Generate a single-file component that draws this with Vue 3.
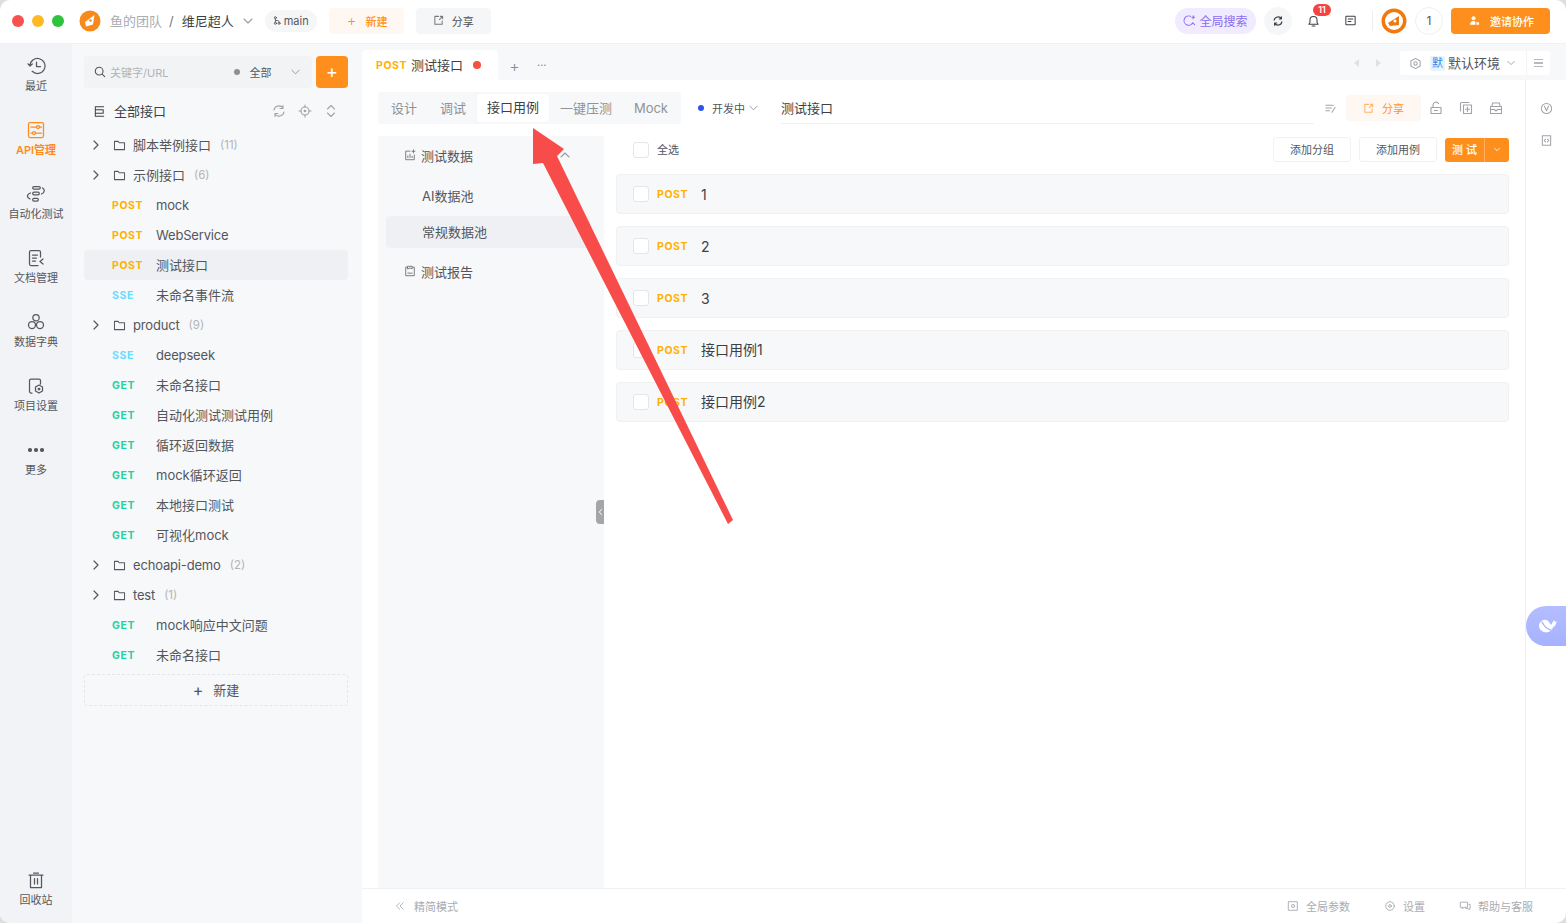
<script setup>
const railItems = [
  { label: '最近', d: 'M4 10a7.5 7.5 0 1 1 2.2 5.3M4 10 2 7.8M4 10l2.3-2M10.5 6v4.5h4' },
  { label: 'API管理', active: true, d: 'M4 2.5h12a1.5 1.5 0 0 1 1.5 1.5v12a1.5 1.5 0 0 1-1.5 1.5H4A1.5 1.5 0 0 1 2.500 16V4A1.500 1.500 0 0 1 4 2.500ZM5 7h5M14 7h1.500M5 13h1.500M10 13h5.500M12 5.500a1.500 1.500 0 1 1 0 3 1.500 1.500 0 0 1 0-3ZM8 11.500a1.500 1.500 0 1 1 0 3 1.500 1.500 0 0 1 0-3Z' },
  { label: '自动化测试', d: 'M8 2.500h5a1.300 1.300 0 0 1 0 2.600H8a1.300 1.300 0 0 1 0-2.600ZM8 8.200h4a1.300 1.300 0 0 1 0 2.600H8a1.300 1.300 0 0 1 0-2.600ZM8 14.400h3a1.300 1.300 0 0 1 0 2.600H8a1.300 1.300 0 0 1 0-2.600ZM16.500 4c2.500 1.500 2.500 4.500-1 6M4.500 9c-4 1.500-4 4.500-.5 6' },
  { label: '文档管理', d: 'M14.500 9V4a1.500 1.500 0 0 0-1.500-1.500H5A1.500 1.500 0 0 0 3.500 4v12A1.500 1.500 0 0 0 5 17.500h7M6.500 7h5M6.500 10h4M6.500 13h3M17 11l-3 2.500 3 2.500' },
  { label: '数据字典', d: 'M10 2.500a3.200 3.200 0 1 1 0 6.400 3.200 3.200 0 0 1 0-6.400ZM6 9.500a3.500 3.500 0 1 1 0 7 3.500 3.500 0 0 1 0-7ZM14 9.500a3.500 3.500 0 1 1 0 7 3.500 3.500 0 0 1 0-7Z' },
  { label: '项目设置', d: 'M6 17H5a1.500 1.500 0 0 1-1.500-1.500v-11A1.500 1.500 0 0 1 5 3h8a1.500 1.500 0 0 1 1.500 1.500V8M13 9l3.500 2v4L13 17l-3.500-2v-4ZM13 12.300a.8.800 0 1 1 0 1.600.8.800 0 0 1 0-1.600Z' }
]

const tree = [
  { folder: true, name: '脚本举例接口', count: 11 },
  { folder: true, name: '示例接口', count: 6 },
  { method: 'POST', name: 'mock' },
  { method: 'POST', name: 'WebService' },
  { method: 'POST', name: '测试接口', active: true },
  { method: 'SSE', name: '未命名事件流' },
  { folder: true, name: 'product', count: 9 },
  { method: 'SSE', name: 'deepseek' },
  { method: 'GET', name: '未命名接口' },
  { method: 'GET', name: '自动化测试测试用例' },
  { method: 'GET', name: '循环返回数据' },
  { method: 'GET', name: 'mock循环返回' },
  { method: 'GET', name: '本地接口测试' },
  { method: 'GET', name: '可视化mock' },
  { folder: true, name: 'echoapi-demo', count: 2 },
  { folder: true, name: 'test', count: 1 },
  { method: 'GET', name: 'mock响应中文问题' },
  { method: 'GET', name: '未命名接口' }
]

const tabs = ['设计', '调试', '接口用例', '一键压测', 'Mock']
const cases = ['1', '2', '3', '接口用例1', '接口用例2']

// the CJK fallback sits a pixel low next to Inter, names get nudged by this
const hasCjk = (s) => /[^\x00-\x7f]/.test(s)
</script>

<template>
  <div class="window">
    <header class="topbar">
      <div class="lights"><i class="red"></i><i class="yellow"></i><i class="green"></i></div>
      <svg class="logo" viewBox="0 0 22 22"><circle cx="11" cy="11" r="10.500" fill="#f78a1d"/><path d="M15.500 5 14 14.500 7 16.500 6 12Z" fill="#fff"/><circle cx="11.500" cy="10.500" r="1.300" fill="#f78a1d"/></svg>
      <span class="team">鱼的团队</span>
      <span class="slash">/</span>
      <span class="project">维尼超人</span>
      <svg class="chev" viewBox="0 0 10 6"><path d="m1 1 4 4 4-4"/></svg>
      <span class="branch">
        <svg viewBox="0 0 10 12"><circle cx="3" cy="2.500" r="1.300"/><circle cx="3" cy="9.500" r="1.300"/><circle cx="7.500" cy="9.500" r="1.300"/><path d="M3 4v4M3 6h3c1 0 1.500.6 1.500 2"/></svg>
        main
      </span>
      <button class="top-btn new"><span class="plus">+</span>新建</button>
      <button class="top-btn share">
        <svg viewBox="0 0 12 12"><path d="M6 1.500H2v8.500h8V6.500M7 5l3.500-3.500M8 1.500h2.500V4"/></svg>
        分享
      </button>
      <div class="spacer"></div>
      <button class="search-all">
        <svg viewBox="0 0 14 14"><path d="M10.500 9.500A5 5 0 1 1 8 2.500M10.500 9.500l2 2M11 2v3M9.500 3.500h3"/></svg>
        全局搜索
      </button>
      <span class="round-btn">
        <svg viewBox="0 0 14 14"><path d="M2.500 6A4.600 4.600 0 0 1 11 4.500M11.500 8A4.600 4.600 0 0 1 3 9.500M11 2v2.600H8.500M3 12V9.400h2.500"/></svg>
      </span>
      <span class="bell">
        <svg viewBox="0 0 14 14"><path d="M2 10.500h10l-1.200-1.800V6a3.800 3.800 0 0 0-7.600 0v2.700ZM5.500 12.500h3"/></svg>
        <b class="badge">11</b>
      </span>
      <svg class="note" viewBox="0 0 14 14"><path d="M2.500 2.500h9a.5.500 0 0 1 .5.500v8a.5.500 0 0 1-.5.500h-9A.5.500 0 0 1 2 11V3a.5.500 0 0 1 .5-.5ZM4.500 5.500h5M4.500 8h3"/></svg>
      <span class="divider"></span>
      <svg class="avatar" viewBox="0 0 26 26"><circle cx="13" cy="13" r="12.500" fill="#f0790f"/><circle cx="13" cy="13" r="9" fill="#fff"/><path d="M18 8v9l-9 1-2-3Z" fill="#f0790f"/><circle cx="14" cy="13" r="1.500" fill="#fff"/></svg>
      <span class="member">1</span>
      <button class="invite">
        <svg viewBox="0 0 12 12"><circle cx="5" cy="3.500" r="2.200"/><path d="M1 10.500c0-2.500 1.800-4 4-4 .8 0 1.500.2 2 .5v3.500ZM8 8h3v2.500H8Z"/></svg>
        邀请协作
      </button>
    </header>

    <div class="body">
      <nav class="rail">
        <a v-for="r in railItems" :key="r.label" class="rail-item" :class="{ on: r.active }">
          <svg viewBox="0 0 20 20"><path :d="r.d"/></svg>
          <span>{{ r.label }}</span>
        </a>
        <a class="rail-item">
          <span class="dots"><i></i><i></i><i></i></span>
          <span>更多</span>
        </a>
        <div class="spacer"></div>
        <a class="rail-item trash">
          <svg viewBox="0 0 20 20"><path d="M3 5h14M7.500 3h5M4.500 5v12.500h11V5M8.500 8.500v5.500M11.500 8.500v5.500"/></svg>
          <span>回收站</span>
        </a>
      </nav>

      <aside class="sidebar">
        <div class="search-row">
          <div class="search-box">
            <svg viewBox="0 0 14 14"><circle cx="6" cy="6" r="4.500"/><path d="m9.500 9.500 3 3"/></svg>
            <span class="ph">关键字/URL</span>
            <i class="grey-dot"></i>
            <span class="all">全部</span>
            <svg class="chev" viewBox="0 0 10 6"><path d="m1 1 4 4 4-4"/></svg>
          </div>
          <button class="add">+</button>
        </div>
        <div class="tree-head">
          <svg viewBox="0 0 14 14"><path d="M2.500 2h9M2.500 2v10h9M2.500 5h8.500v4H2.500"/></svg>
          <span>全部接口</span>
          <div class="spacer"></div>
          <svg class="tool" viewBox="0 0 14 14"><path d="M2 6A5 5 0 0 1 11 4M12 8A5 5 0 0 1 3 10M11 1.500V4.500H8M3 12.500V9.500h3"/></svg>
          <svg class="tool" viewBox="0 0 14 14"><circle cx="7" cy="7" r="4"/><circle cx="7" cy="7" r=".8"/><path d="M7 1v2M7 11v2M1 7h2M11 7h2"/></svg>
          <svg class="tool" viewBox="0 0 14 14"><path d="m3.500 5 3.500-3.500L10.500 5M3.500 9l3.500 3.500L10.500 9"/></svg>
        </div>
        <ul class="tree">
          <li v-for="(n, i) in tree" :key="i" class="node" :class="{ on: n.active }">
            <template v-if="n.folder">
              <svg class="arrow-r" viewBox="0 0 6 10"><path d="m1 1 4 4-4 4"/></svg>
              <svg class="folder" viewBox="0 0 14 12"><path d="M1.500 1.500h4l1.200 1.500h5.800v7.500h-11Z"/></svg>
              <span class="n-name" :class="hasCjk(n.name) ? 'cjk' : 'latin'">{{ n.name }}</span>
              <span class="n-count">({{ n.count }})</span>
            </template>
            <template v-else>
              <span class="method" :class="n.method.toLowerCase()">{{ n.method }}</span>
              <span class="n-name" :class="hasCjk(n.name) ? 'cjk' : 'latin'">{{ n.name }}</span>
            </template>
          </li>
        </ul>
        <button class="tree-new"><span>+</span><em class="cjk">新建</em></button>
      </aside>

      <main class="main">
        <div class="tabbar">
          <div class="tab">
            <span class="method post">POST</span>
            <span class="tab-name cjk">测试接口</span>
            <i class="unsaved"></i>
          </div>
          <span class="tab-plus">+</span>
          <span class="tab-more">···</span>
          <div class="spacer"></div>
          <span class="nav-arrows"><i class="left"></i><i class="right"></i></span>
          <div class="env">
            <svg viewBox="0 0 14 14"><path d="m7 1.500 5 2.800v5.400l-5 2.800-5-2.800V4.300Z"/><circle cx="7" cy="7" r="1.800"/></svg>
            <span class="env-tag">默</span>
            <span class="cjk">默认环境</span>
            <svg class="chev" viewBox="0 0 10 6"><path d="m1 1 4 4 4-4"/></svg>
          </div>
          <div class="env-menu"><i></i><i></i><i></i></div>
        </div>

        <div class="work">
          <div class="center">
            <div class="toolbar">
              <div class="segment">
                <span v-for="t in tabs" :key="t" class="seg" :class="{ on: t === '接口用例', latin: !hasCjk(t) }">{{ t }}</span>
              </div>
              <i class="blue-dot"></i>
              <span class="status">开发中</span>
              <svg class="chev status-chev" viewBox="0 0 10 6"><path d="m1 1 4 4 4-4"/></svg>
              <div class="api-name">测试接口</div>
              <svg class="act small" viewBox="0 0 14 14"><path d="M2 3.500h8M2 6.500h6M2 9.500h4M12 6 8.500 11"/></svg>
              <button class="share-btn">
                <svg viewBox="0 0 12 12"><path d="M6 1.500H2v8.500h8V6.500M7 5l3.500-3.500M8 1.500h2.500V4"/></svg>
                分享
              </button>
              <svg class="act first" viewBox="0 0 14 14"><path d="M2 6.500h10v6H2ZM4 6.500V4a3 3 0 0 1 5.500-1.500M5.500 9.500h3"/></svg>
              <svg class="act" viewBox="0 0 14 14"><path d="M10 1.500H2.500a1 1 0 0 0-1 1V10M4.500 4h8v8.500h-8ZM8.500 6v4.500M6.500 8.200h4"/></svg>
              <svg class="act" viewBox="0 0 14 14"><path d="M1.500 5.500h11v7h-11ZM3 5.500 3.500 2h7l.5 3.500M1.500 8.500h4l1.500 1.500 1.500-1.500h4"/></svg>
            </div>

            <div class="content">
              <aside class="pools">
                <div class="pool-head">
                  <svg viewBox="0 0 14 14"><path d="M7 2.500H2v10h10V7M4.500 10V8M7 10V6M9.500 10V8.500M11 1v3.500M9.300 2.700h3.400"/></svg>
                  <span>测试数据</span>
                  <div class="spacer"></div>
                  <svg class="chev up" viewBox="0 0 10 6"><path d="m1 5 4-4 4 4"/></svg>
                </div>
                <div class="pool-item">AI数据池</div>
                <div class="pool-item on">常规数据池</div>
                <div class="pool-head report">
                  <svg viewBox="0 0 14 14"><path d="M4 2.500H2v10h10v-10h-2M4.500 1.500h5v3l-2.500-1-2.500 1ZM4.500 9.500h5"/></svg>
                  <span>测试报告</span>
                </div>
                <span class="collapse"><svg viewBox="0 0 6 10"><path d="M4.500 1.500 1.500 5l3 3.500"/></svg></span>
              </aside>

              <section class="cases">
                <div class="cases-head">
                  <i class="check"></i>
                  <span class="check-all">全选</span>
                  <div class="spacer"></div>
                  <button class="ghost">添加分组</button>
                  <button class="ghost">添加用例</button>
                  <div class="run">
                    <span class="run-main">测 试</span>
                    <span class="run-drop"><svg viewBox="0 0 10 6"><path d="m2 1.500 3 3 3-3"/></svg></span>
                  </div>
                </div>
                <div v-for="c in cases" :key="c" class="case">
                  <i class="check"></i>
                  <span class="method post">POST</span>
                  <span class="case-name" :class="{ cjk: hasCjk(c) }">{{ c }}</span>
                </div>
              </section>
            </div>
          </div>

          <aside class="side-tools">
            <svg viewBox="0 0 14 14"><circle cx="7" cy="7" r="5.500"/><path d="m4.800 4.500 2.200 5 2.200-5"/></svg>
            <svg viewBox="0 0 14 14"><path d="M2.500 2h9v10h-9ZM6 5.500 4.500 7 6 8.500M8 5.500 9.500 7 8 8.500"/></svg>
          </aside>
        </div>

        <footer class="footer">
          <svg viewBox="0 0 12 10"><path d="M5.500 1 1.500 5l4 4M10 1 6 5l4 4"/></svg>
          <span>精简模式</span>
          <div class="spacer"></div>
          <span class="foot-item"><svg viewBox="0 0 14 14"><path d="M2 2h10v10H2Z"/><circle cx="7" cy="7" r="1.800"/></svg>全局参数</span>
          <span class="foot-item"><svg viewBox="0 0 14 14"><circle cx="7" cy="7" r="5"/><circle cx="7" cy="7" r="1.600"/></svg>设置</span>
          <span class="foot-item"><svg viewBox="0 0 14 14"><path d="M2 2.500h8v6H5.500L4 10.500v-2H2ZM11.500 5H13v5h-1v1.500L10.500 10H8"/></svg>帮助与客服</span>
        </footer>
      </main>
    </div>

    <div class="whale">
      <svg viewBox="0 0 20 18"><path d="M1 8c1-5 7-7 10-3l2 3 3-5 1 2 2-1-2 5-2 1c-1 5-7 7-11 4C2 13 1 11 1 8Z" fill="#fff"/><path d="M4 5c2 4 5 7 9 8" stroke="#a9b5ff" stroke-width="1.400" fill="none"/></svg>
    </div>

    <!-- red annotation arrow drawn over the screenshot -->
    <svg class="annotation" viewBox="0 0 1566 923">
      <path d="M533 128 564 149 557 156 733 520 728 524 543 163 533 164Z" fill="#f74c4a"/>
    </svg>
  </div>
</template>

<style>
html, body { margin: 0; background: #dedede; }
</style>

<style scoped>
* { box-sizing: border-box; }
svg { fill: none; stroke: currentColor; stroke-width: 1.100; stroke-linecap: round; stroke-linejoin: round; flex: none; display: block; }
button { border: none; font-family: inherit; cursor: pointer; padding: 0; }
ul { list-style: none; margin: 0; padding: 0; }
i { display: block; font-style: normal; }
em { font-style: normal; }
.spacer { flex: 1; }
.chev { width: 9px; height: 6px; color: #9a9da3; }
.cjk { padding-bottom: 2px; }
.latin { letter-spacing: -.17px; }

.window {
  position: relative;
  width: 1566px;
  height: 923px;
  overflow: hidden;
  border-radius: 10px;
  background: #fff;
  display: flex;
  flex-direction: column;
  font-family: Inter, "Noto Sans CJK SC", "Noto Sans", sans-serif;
  color: #3c3f45;
  font-size: 13px;
}

/* top bar */
.topbar { height: 44px; flex: none; display: flex; align-items: center; padding: 0 16px 2px 12px; border-bottom: 1px solid #eff0f2; }
.lights { display: flex; gap: 8px; margin-right: 15px; }
.lights i { width: 12px; height: 12px; border-radius: 50%; }
.red { background: #f8524e; }
.yellow { background: #fdb926; }
.green { background: #2ec33d; }
.logo { width: 22px; height: 22px; stroke: none; margin-right: 9px; }
.team { color: #a9acb2; width: 52px; white-space: nowrap; }
.slash { color: #777; margin: 0 8px 0 7px; }
.project { color: #3c3f45; width: 52px; white-space: nowrap; }
.topbar > .chev { margin-left: 9px; width: 10px; }
.branch { margin-left: 12px; width: 52px; height: 22px; border-radius: 11px; background: #f5f6f8; font-size: 11px; display: flex; align-items: center; justify-content: center; gap: 3px; color: #55585e; }
.branch svg { width: 8px; height: 11px; }
.top-btn { height: 26px; width: 75px; border-radius: 4px; font-size: 11px; display: flex; align-items: center; justify-content: center; }
.new { margin-left: 12px; background: #fff8f2; color: #ff931e; gap: 9px; font-weight: 500; padding-left: 2px; }
.plus { font-size: 15px; line-height: 1; font-weight: 300; }
.share { margin-left: 12px; background: #f5f6f8; color: #4d5056; gap: 8px; }
.share svg { width: 11px; height: 11px; color: #777; }
.search-all { width: 81px; height: 26px; border-radius: 13px; background: #f0ebff; color: #8a6df2; font-size: 12px; display: flex; align-items: center; justify-content: center; gap: 3px; }
.search-all svg { width: 13px; height: 13px; }
.round-btn { margin-left: 8px; width: 28px; height: 28px; border-radius: 50%; background: #f5f6f8; display: flex; align-items: center; justify-content: center; }
.round-btn svg { width: 12px; height: 12px; stroke-width: 1.300; }
.bell { position: relative; margin-left: 15px; width: 13px; height: 14px; }
.bell svg { width: 13px; height: 14px; }
.badge { position: absolute; top: -10px; left: 6px; min-width: 18px; height: 12px; line-height: 12px; border-radius: 7px; background: #f5443f; color: #fff; font-size: 9px; font-weight: 600; text-align: center; }
.note { margin-left: 24px; width: 13px; height: 13px; }
.divider { width: 1px; height: 20px; background: #eceef0; margin: 0 8px 0 15px; }
.avatar { width: 26px; height: 26px; stroke: none; }
.member { margin-left: 8px; width: 28px; height: 28px; border-radius: 50%; border: 1px solid #eff0f2; font-size: 12px; display: flex; align-items: center; justify-content: center; color: #555; }
.invite { margin-left: 8px; width: 99px; height: 26px; border-radius: 4px; background: #ff8f1c; color: #fff; font-size: 11px; font-weight: 500; display: flex; align-items: center; justify-content: center; gap: 10px; padding-left: 2px; }
.invite svg { width: 11px; height: 11px; fill: #fff; stroke: none; }

.body { flex: 1; min-height: 0; display: flex; }

/* left rail */
.rail { width: 72px; flex: none; background: #f1f3f6; display: flex; flex-direction: column; align-items: center; padding: 10px 0 9px; }
.rail-item { width: 72px; height: 64px; display: flex; flex-direction: column; align-items: center; gap: 1px; font-size: 11px; color: #55585e; padding-top: 2px; white-space: nowrap; }
.rail-item svg { width: 20px; height: 20px; stroke-width: 1.250; }
.rail-item.on { color: #ff8c1a; font-weight: 600; }
.dots { height: 20px; display: flex; align-items: center; gap: 2.500px; }
.dots i { width: 3.500px; height: 3.500px; border-radius: 50%; background: #55585e; }
.trash { height: 44px; padding-top: 0; }

/* sidebar */
.sidebar { width: 290px; flex: none; background: #f7f8fa; padding: 12px 14px 0 12px; }
.search-row { display: flex; gap: 4px; height: 32px; }
.search-box { width: 228px; background: #f2f3f5; border-radius: 4px; display: flex; align-items: center; padding: 0 12px 0 10px; font-size: 11px; }
.search-box > svg:first-child { width: 12px; height: 12px; color: #55585e; stroke-width: 1.300; }
.ph { margin-left: 4px; color: #b0b3b8; }
.grey-dot { width: 6px; height: 6px; border-radius: 50%; background: #8c8f94; margin-left: 66px; }
.all { margin-left: 9px; color: #55585e; }
.search-box .chev { margin-left: auto; }
.add { width: 32px; height: 32px; border-radius: 4px; background: #ff8f1c; color: #fff; font-size: 18px; line-height: 1; font-weight: 400; }
.tree-head { height: 30px; margin-top: 8px; display: flex; align-items: center; padding: 0 10px 0 9px; }
.tree-head svg { width: 13px; height: 13px; }
.tree-head span { margin-left: 8px; padding-bottom: 2px; }
.tree-head .tool { width: 14px; height: 14px; color: #a0a3a8; margin-left: 12px; }
.tree { margin-top: 4px; }
.node { height: 30px; display: flex; align-items: center; padding-left: 28px; border-radius: 4px; white-space: nowrap; color: #53565c; position: relative; }
.node.on { background: #eef0f3; }
.arrow-r { position: absolute; left: 9px; width: 6px; height: 10px; color: #55585e; stroke-width: 1.200; }
.folder { width: 13px; height: 11px; margin-right: 7px; color: #55585e; margin-left: 1px; }
.n-count { margin-left: 9px; font-size: 11.500px; color: #b2b4b9; }
.method { font-size: 10.500px; font-weight: 700; letter-spacing: .6px; width: 44px; flex: none; font-family: Inter, sans-serif; }
.post { color: #ffb000; }
.get { color: #25d09f; }
.sse { color: #66dcff; }
.tree-new { margin-top: 4px; width: 264px; height: 32px; border: 1px dashed #e4e6ea; border-radius: 3px; background: transparent; color: #53565c; font-size: 13px; display: flex; align-items: center; justify-content: center; gap: 10px; }
.tree-new span { font-size: 16px; line-height: 1; }

/* main */
.main { flex: 1; min-width: 0; display: flex; flex-direction: column; }
.tabbar { height: 36px; flex: none; background: #f7f8fa; display: flex; align-items: flex-end; padding-right: 16px; }
.tab { width: 136px; height: 30px; background: #fff; border-radius: 4px 4px 0 0; display: flex; align-items: center; padding-left: 14px; }
.tab .method { width: 35px; }
.tab-name { color: #3c3f45; font-size: 13px; white-space: nowrap; }
.unsaved { width: 8px; height: 8px; border-radius: 50%; background: #f6503f; margin-left: 10px; }
.tab-plus { align-self: center; margin: 7px 0 0 10px; font-size: 16px; color: #8a8d93; width: 13px; text-align: center; font-weight: 300; line-height: 1; }
.tab-more { align-self: center; margin: 7px 0 0 16px; color: #8a8d93; font-size: 11px; line-height: 1; }
.nav-arrows { align-self: center; margin-top: 2px; display: flex; gap: 17px; margin-right: 19px; }
.nav-arrows i { width: 0; height: 0; border-top: 4px solid transparent; border-bottom: 4px solid transparent; }
.nav-arrows .left { border-right: 5px solid #dfe1e5; }
.nav-arrows .right { border-left: 5px solid #dfe1e5; }
.env { align-self: center; margin-top: 2px; width: 126px; height: 24px; background: #fff; border-radius: 3px 0 0 3px; display: flex; align-items: center; padding-left: 9px; font-size: 13px; color: #53565c; white-space: nowrap; }
.env > svg:first-child { width: 13px; height: 13px; color: #a0a3a8; margin-right: 8px; }
.env-tag { width: 15px; height: 15px; background: #e8f3fe; color: #2f88e8; font-size: 11px; line-height: 15px; text-align: center; border-radius: 2px; margin-right: 3px; }
.env .chev { margin-left: 7px; width: 8px; }
.env-menu { align-self: center; margin-top: 2px; width: 24px; height: 24px; background: #fff; border-left: 1px solid #f2f3f5; border-radius: 0 3px 3px 0; display: flex; flex-direction: column; align-items: center; justify-content: center; gap: 2px; }
.env-menu i { width: 9px; height: 1.400px; background: #b6b8bd; }

.work { flex: 1; min-height: 0; display: flex; }
.center { flex: 1; min-width: 0; padding: 12px 16px 0; display: flex; flex-direction: column; }
.toolbar { height: 32px; flex: none; display: flex; align-items: center; }
.segment { width: 303px; height: 32px; background: #f7f8fa; border-radius: 4px; display: flex; align-items: center; padding: 0 13px 2px; }
.seg { color: #8f9297; white-space: nowrap; margin-right: 23px; }
.seg:nth-child(2) { margin-right: 22px; }
.seg:nth-child(4) { margin-right: 22px; }
.seg:last-child { margin: 2px 0 0; letter-spacing: 0; }
.seg.on { color: #3c3f45; background: #fff; height: 28px; line-height: 26px; width: 74px; text-align: center; border-radius: 3px; margin: 2px 11px 0 -11px; box-shadow: 0 0 2px rgba(0, 0, 0, .05); }
.blue-dot { width: 6px; height: 6px; border-radius: 50%; background: #2b55f0; margin-left: 17px; }
.status { margin-left: 8px; font-size: 11px; color: #53565c; white-space: nowrap; }
.status-chev { margin-left: 4px; width: 9px; }
.api-name { margin-left: 23px; width: 533px; height: 31px; line-height: 30px; border-bottom: 1px solid #f0f1f3; color: #3c3f45; white-space: nowrap; }
.act { width: 14px; height: 14px; color: #a0a3a8; margin-left: 16px; }
.act.first { margin-left: 8px; }
.act.small { width: 13px; height: 13px; margin-left: 10px; margin-right: 9px; }
.share-btn { width: 75px; height: 26px; background: #fff8f2; border-radius: 4px; color: #ff931e; font-size: 11px; display: flex; align-items: center; justify-content: center; gap: 8px; margin-left: 0; }
.share-btn svg { width: 11px; height: 11px; color: #ffb36b; }
.content { flex: 1; min-height: 0; display: flex; margin-top: 12px; }
.pools { position: relative; width: 226px; flex: none; background: #f7f8fa; padding: 0 8px; }
.pool-head { height: 40px; display: flex; align-items: center; padding: 0 26px 2px 18px; font-size: 13px; color: #53565c; white-space: nowrap; }
.pool-head svg:first-child { width: 12px; height: 12px; margin-right: 5px; color: #777; }
.pool-head .up { width: 10px; }
.pool-item { height: 32px; line-height: 33px; padding-left: 36px; color: #53565c; font-size: 13px; margin-top: 4px; border-radius: 4px; width: 204px; }
.pool-item.on { background: #eef0f3; }
.report { margin-top: 4px; }
.collapse { position: absolute; right: 0; top: 364px; width: 8px; height: 24px; background: #a5a6aa; border-radius: 4px 0 0 4px; display: flex; align-items: center; justify-content: center; color: #fff; }
.collapse svg { width: 5px; height: 8px; }
.cases { flex: 1; min-width: 0; padding-left: 12px; }
.cases-head { height: 28px; display: flex; align-items: center; padding: 0 0 0 17px; margin-bottom: 10px; }
.check { width: 16px; height: 16px; border: 1px solid #e4e6ea; border-radius: 3px; background: #fff; flex: none; }
.check-all { margin-left: 8px; font-size: 11px; color: #53565c; padding-bottom: 2px; }
.ghost { width: 78px; height: 25px; border: 1px solid #f0f1f3; border-radius: 3px; background: #fff; color: #53565c; font-size: 11px; margin: 0 8px 1px 0; padding-bottom: 1px; }
.run { width: 64px; height: 24px; background: #ff8f1c; border-radius: 3px; display: flex; align-items: center; color: #fff; margin-bottom: 1px; }
.run-main { width: 40px; text-align: center; font-size: 11px; font-weight: 500; border-right: 1px solid #ffb266; line-height: 24px; }
.run-drop { flex: 1; display: flex; justify-content: center; }
.run-drop svg { width: 8px; height: 5px; }
.case { height: 40px; margin-bottom: 12px; padding-left: 16px; display: flex; align-items: center; background: #f7f8fa; border: 1px solid #f0f1f3; border-radius: 4px; }
.case .method { margin-left: 8px; width: 44px; }
.case-name { font-size: 14px; color: #3c3f45; }
.side-tools { width: 41px; flex: none; border-left: 1px solid #eff0f2; display: flex; flex-direction: column; align-items: center; gap: 19px; padding: 22px 0 0 0; color: #a0a3a8; }
.side-tools svg { width: 13px; height: 13px; }

.footer { height: 35px; flex: none; border-top: 1px solid #eff0f2; display: flex; align-items: center; padding: 0 33px 0 33px; font-size: 11px; color: #a9acb2; }
.footer > svg { width: 10px; height: 8px; margin-right: 9px; }
.foot-item { display: flex; align-items: center; gap: 7px; margin-left: 34px; }
.foot-item svg { width: 12px; height: 12px; }

.whale { position: absolute; left: 1526px; top: 606px; width: 40px; height: 40px; border-radius: 20px 0 0 20px; background: linear-gradient(#b4bdff, #a6b2ff); display: flex; align-items: center; padding-left: 12px; }
.whale svg { width: 20px; height: 18px; stroke: none; }

.annotation { position: absolute; inset: 0; width: 1566px; height: 923px; stroke: none; pointer-events: none; }
</style>
